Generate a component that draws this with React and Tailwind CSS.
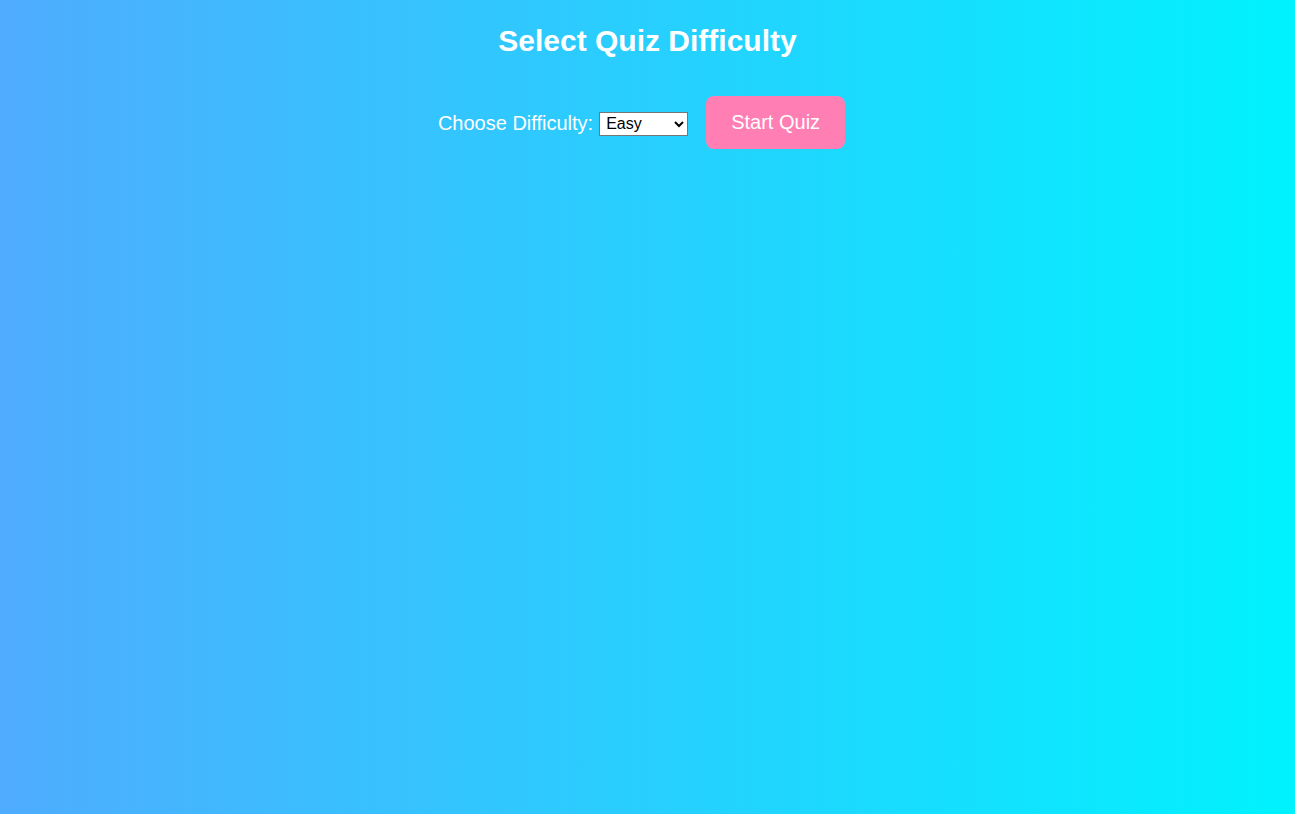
import React, { useState } from 'react'

export default function App() {
  const [level, setLevel] = useState('easy')

  return (
    <div className="min-h-[814px] w-full bg-[linear-gradient(to_right,#4facfe,#00f2fe)] text-center font-['Liberation_Sans',Arial,sans-serif] text-white">
      <h1 className="pt-[22px] text-[30px] font-bold leading-[37px]">
        Select Quiz Difficulty
      </h1>
      <div className="mt-[37px] flex items-center justify-center">
        <label htmlFor="difficulty" className="mt-[2px] text-[20px] leading-[23px]">
          Choose Difficulty:
        </label>
        <select
          id="difficulty"
          value={level}
          onChange={(e) => setLevel(e.target.value)}
          className="ml-[6px] mt-[2px] h-[24px] w-[89px] appearance-auto border border-[#767676] bg-white px-[2px] text-[16px] leading-[18px] text-black"
        >
          <option value="easy">Easy</option>
          <option value="medium">Medium</option>
          <option value="hard">Hard</option>
        </select>
        <button className="ml-[18px] mr-[12px] rounded-[8px] bg-[#ff7eb3] px-[25px] py-[15px] text-[20px] leading-[23px] text-white">
          Start Quiz
        </button>
      </div>
    </div>
  )
}
